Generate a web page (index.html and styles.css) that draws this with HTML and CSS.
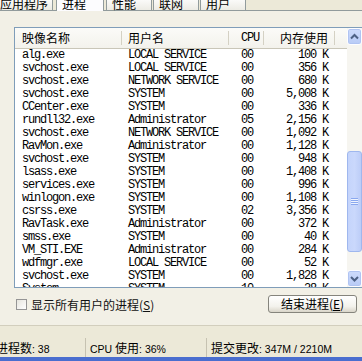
FILE: index.html
```html
<!DOCTYPE html>
<html lang="zh-CN">
<head>
    <meta charset="UTF-8">
    <title>Windows 任务管理器 - 进程</title>
    <link rel="stylesheet" href="styles.css">
</head>
<body>
<!-- 选项卡 -->
<div class="tabs">
    <div class="tab first">应用程序</div>
    <div class="tab active">进程</div>
    <div class="tab">性能</div>
    <div class="tab">联网</div>
    <div class="tab">用户</div>
</div>

<div class="page">
    <!-- 进程列表 -->
    <div class="listbox">
        <div class="table">
            <div class="row head">
                <div class="cell">映像名称</div>
                <div class="cell">用户名</div>
                <div class="cell cpu mono">CPU</div>
                <div class="cell mem">内存使用</div>
            </div>
            <div class="rows">
                <div class="row"><div class="cell">alg.exe</div><div class="cell">LOCAL SERVICE</div><div class="cell cpu">00</div><div class="cell mem">100 K</div></div>
                <div class="row"><div class="cell">svchost.exe</div><div class="cell">LOCAL SERVICE</div><div class="cell cpu">00</div><div class="cell mem">356 K</div></div>
                <div class="row"><div class="cell">svchost.exe</div><div class="cell">NETWORK SERVICE</div><div class="cell cpu">00</div><div class="cell mem">680 K</div></div>
                <div class="row"><div class="cell">svchost.exe</div><div class="cell">SYSTEM</div><div class="cell cpu">00</div><div class="cell mem">5,008 K</div></div>
                <div class="row"><div class="cell">CCenter.exe</div><div class="cell">SYSTEM</div><div class="cell cpu">00</div><div class="cell mem">336 K</div></div>
                <div class="row"><div class="cell">rundll32.exe</div><div class="cell">Administrator</div><div class="cell cpu">05</div><div class="cell mem">2,156 K</div></div>
                <div class="row"><div class="cell">svchost.exe</div><div class="cell">NETWORK SERVICE</div><div class="cell cpu">00</div><div class="cell mem">1,092 K</div></div>
                <div class="row"><div class="cell">RavMon.exe</div><div class="cell">Administrator</div><div class="cell cpu">00</div><div class="cell mem">1,128 K</div></div>
                <div class="row"><div class="cell">svchost.exe</div><div class="cell">SYSTEM</div><div class="cell cpu">00</div><div class="cell mem">948 K</div></div>
                <div class="row"><div class="cell">lsass.exe</div><div class="cell">SYSTEM</div><div class="cell cpu">00</div><div class="cell mem">1,408 K</div></div>
                <div class="row"><div class="cell">services.exe</div><div class="cell">SYSTEM</div><div class="cell cpu">00</div><div class="cell mem">996 K</div></div>
                <div class="row"><div class="cell">winlogon.exe</div><div class="cell">SYSTEM</div><div class="cell cpu">00</div><div class="cell mem">1,108 K</div></div>
                <div class="row"><div class="cell">csrss.exe</div><div class="cell">SYSTEM</div><div class="cell cpu">02</div><div class="cell mem">3,356 K</div></div>
                <div class="row"><div class="cell">RavTask.exe</div><div class="cell">Administrator</div><div class="cell cpu">00</div><div class="cell mem">372 K</div></div>
                <div class="row"><div class="cell">smss.exe</div><div class="cell">SYSTEM</div><div class="cell cpu">00</div><div class="cell mem">40 K</div></div>
                <div class="row"><div class="cell">VM_STI.EXE</div><div class="cell">Administrator</div><div class="cell cpu">00</div><div class="cell mem">284 K</div></div>
                <div class="row"><div class="cell">wdfmgr.exe</div><div class="cell">LOCAL SERVICE</div><div class="cell cpu">00</div><div class="cell mem">52 K</div></div>
                <div class="row"><div class="cell">svchost.exe</div><div class="cell">SYSTEM</div><div class="cell cpu">00</div><div class="cell mem">1,828 K</div></div>
                <div class="row"><div class="cell">System</div><div class="cell">SYSTEM</div><div class="cell cpu">10</div><div class="cell mem">28 K</div></div>
            </div>
        </div>

        <!-- 滚动条 -->
        <div class="scrollbar">
            <div class="sb-btn">
                <svg width="13" height="15" viewBox="0 0 13 15"><path d="M3 9.5 L6.5 6 L10 9.5" fill="none" stroke="#4d6185" stroke-width="2"/></svg>
            </div>
            <div class="sb-track">
                <div class="sb-thumb"><span class="grip"></span></div>
            </div>
            <div class="sb-btn">
                <svg width="13" height="15" viewBox="0 0 13 15"><path d="M3 6 L6.5 9.5 L10 6" fill="none" stroke="#4d6185" stroke-width="2"/></svg>
            </div>
        </div>
    </div>

    <div class="options">
        <label class="check"><span class="box"></span>显示所有用户的进程(<u>S</u>)</label>
        <button class="end-btn">结束进程(<u>E</u>)</button>
    </div>
</div>

<!-- 状态栏 -->
<div class="status">
    <div class="panel p1"><span class="shift"><span class="cn">进程数</span>: 38</span></div>
    <div class="panel p2">CPU <span class="cn">使用</span>: 36%</div>
    <div class="panel p3"><span class="cn">提交更改</span>: 347M / 2210M</div>
</div>
<div class="taskbar"></div>
</body>
</html>
```

FILE: styles.css
```css
html, body {
    margin: 0;
}
body {
    width: 362px;
    height: 361px;
    overflow: hidden;
    background-color: #ece9d8;
    font-family: "Noto Sans CJK SC", sans-serif;
    font-size: 12px;
    color: #000;
}

/* 选项卡 */
.tabs {
    display: flex;
    align-items: flex-end;
    height: 15px;
    margin-top: -5px;
    margin-left: -5px;
}
.tab {
    box-sizing: border-box;
    width: 46px;
    height: 14px;
    line-height: 13px;
    padding: 0 5px;
    margin-right: 1px;
    border: 1px solid #919b9c;
    border-bottom: none;
    border-radius: 3px 3px 0 0;
    background: linear-gradient(#ffffff, #ecebe4);
    white-space: nowrap;
}
.tab.first {
    width: 58px;
    padding: 0 4px;
}
.tab.active {
    width: 48px;
    height: 17px;
    padding-top: 2px;
    margin: 0 2px -1px 2px;
    background: #fcfcfe;
}

/* 选项卡页面 */
.page {
    box-sizing: border-box;
    height: 315px;
    padding: 16px 0 0 14px;
    border-top: 1px solid #919b9c;
    background-color: #f2f0e6;
}
.listbox {
    display: flex;
    width: 352px;
    height: 259px;
    border: 1px solid #7f9db9;
    border-right: none;
    background-color: #fff;
}
.table {
    width: 332px;
    flex-shrink: 0;
}
.row {
    display: grid;
    grid-template-columns: 107px 107px 35px 71px;
    height: 13px;
    line-height: 13px;
    font-family: "Liberation Mono", "Noto Sans CJK SC", monospace;
    font-size: 12px;
    letter-spacing: -1.2px;
    white-space: nowrap;
}
.cell {
    padding-left: 7px;
    overflow: hidden;
}
.cell:nth-child(2) {
    padding-left: 6px;
}
.cell.cpu {
    padding-left: 12px;
}
.cell.mem {
    padding: 0 7px 0 0;
    text-align: right;
}
.row.head {
    height: 20px;
    line-height: 20px;
    border-bottom: 1px solid #c9c6b8;
    background: #fbfbf8 linear-gradient(#fbfbf8, #f3f2ec);
    font-family: "Noto Sans CJK SC", sans-serif;
    font-size: 12px;
    letter-spacing: 0;
}
.row.head .cell {
    background: linear-gradient(#d4d1c4, #d4d1c4) no-repeat right 3px / 1px 14px;
}
.row.head .mono {
    font-family: "Liberation Mono", monospace;
    letter-spacing: -1.2px;
}
.rows {
    height: 238px;
    overflow: hidden;
}

/* 滚动条 */
.scrollbar {
    display: flex;
    flex-direction: column;
    width: 15px;
    flex-shrink: 0;
    background-color: #f6f5f0;
}
.sb-btn {
    box-sizing: border-box;
    height: 17px;
    display: flex;
    align-items: center;
    justify-content: center;
    border: 1px solid #fdfdff;
    border-radius: 3px;
    background: linear-gradient(#cddbfc, #b8cbf6);
    box-shadow: inset 0 0 0 1px #b0c4f2;
}
.sb-track {
    flex: 1;
    padding-top: 106px;
}
.sb-thumb {
    box-sizing: border-box;
    height: 101px;
    display: flex;
    align-items: center;
    justify-content: center;
    border: 1px solid #9fb7ee;
    border-radius: 3px;
    background: linear-gradient(90deg, #c4d4fb, #cad8fc 50%, #bccdf7);
}
.grip {
    width: 7px;
    height: 7px;
    background: repeating-linear-gradient(#8aa8ef 0 1px, #eef3fe 1px 2px);
}

/* 复选框与按钮 */
.options {
    display: flex;
    justify-content: space-between;
    align-items: center;
    width: 341px;
    margin: 7px 0 0 2px;
}
.check {
    display: flex;
    align-items: center;
    color: #111;
}
.box {
    box-sizing: border-box;
    width: 11px;
    height: 11px;
    margin-right: 4px;
    border: 1px solid #959595;
    background: linear-gradient(135deg, #e6e5de, #ffffff);
}
.check u, .end-btn u {
    text-underline-offset: 1px;
}
.end-btn {
    box-sizing: border-box;
    width: 89px;
    height: 18px;
    padding: 0;
    border: 1px solid #85847c;
    border-radius: 3px;
    background: linear-gradient(#ffffff, #f3f2ec 65%, #d9d5c9);
    font-family: "Noto Sans CJK SC", sans-serif;
    font-size: 12px;
    line-height: 16px;
    color: #000;
}

/* 状态栏 */
.status {
    display: flex;
    align-items: flex-end;
    height: 31px;
    border-top: 1px solid #d2cebd;
    font-family: "Liberation Sans", "Noto Sans CJK SC", sans-serif;
    font-size: 10.5px;
    white-space: nowrap;
}
.panel {
    box-sizing: border-box;
    height: 19px;
    line-height: 19px;
}
.p1 {
    width: 85px;
}
.p2 {
    width: 121px;
    padding-left: 4px;
    border-left: 1px solid #c6c2b1;
}
.p3 {
    flex: 1;
    padding-left: 4px;
    border-left: 1px solid #c6c2b1;
}
.shift {
    margin-left: -4px;
}
.cn {
    font-family: "Noto Sans CJK SC", sans-serif;
    font-size: 12px;
}
.taskbar {
    height: 4px;
    background-color: #4a6ecf;
}
```
